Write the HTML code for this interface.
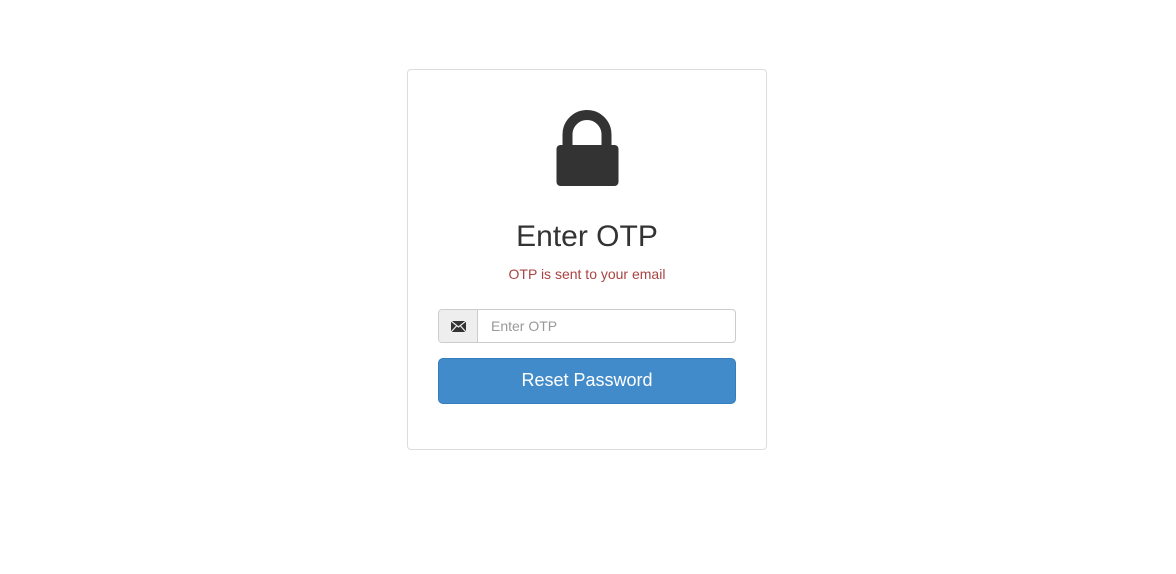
<!DOCTYPE html>
<html><head><style>
body{margin:0;background:#fff;font-family:"Liberation Sans",sans-serif;}
.card{position:absolute;left:407px;top:69px;width:358px;height:379px;border:1px solid #ddd;border-radius:4px;}
.title{position:absolute;left:0;width:100%;top:149px;text-align:center;font-size:30px;color:#333;line-height:36px;}
.sub{position:absolute;left:0;width:100%;top:196px;text-align:center;font-size:14px;color:#a94442;}
.ig{position:absolute;left:30px;top:239px;width:296px;height:32px;border:1px solid #ccc;border-radius:4px;}
.addon{position:absolute;left:0;top:0;width:38px;height:32px;background:#eee;border-right:1px solid #ccc;border-radius:4px 0 0 4px;}
.ph{position:absolute;left:52px;top:8px;font-size:14px;color:#999;}
.btn{position:absolute;left:30px;top:288px;width:296px;height:44px;background:#428bca;border:1px solid #357ebd;border-radius:5px;color:#fff;font-size:18px;text-align:center;line-height:43px;}
</style></head><body>
<div class="card">
<svg style="position:absolute;left:148px;top:40px" width="64" height="80" viewBox="0 0 64 80">
<path d="M11.5 38V24.5A19.5 19.5 0 0 1 50.5 24.5V38" fill="none" stroke="#333" stroke-width="10"/>
<rect x="0.5" y="35" width="62" height="41" rx="4" fill="#333"/>
</svg>
<div class="title">Enter OTP</div>
<div class="sub">OTP is sent to your email</div>
<div class="ig"><div class="addon"><svg style="position:absolute;left:12px;top:11px" width="15" height="11" viewBox="0 0 15 11"><rect width="15" height="11" fill="#333"/><path d="M0 0L7.5 6L15 0M0 11L5.5 5M15 11L9.5 5" stroke="#eee" stroke-width="1.2" fill="none"/></svg></div><div class="ph">Enter OTP</div></div>
<div class="btn">Reset Password</div>
</div>
</body></html>
